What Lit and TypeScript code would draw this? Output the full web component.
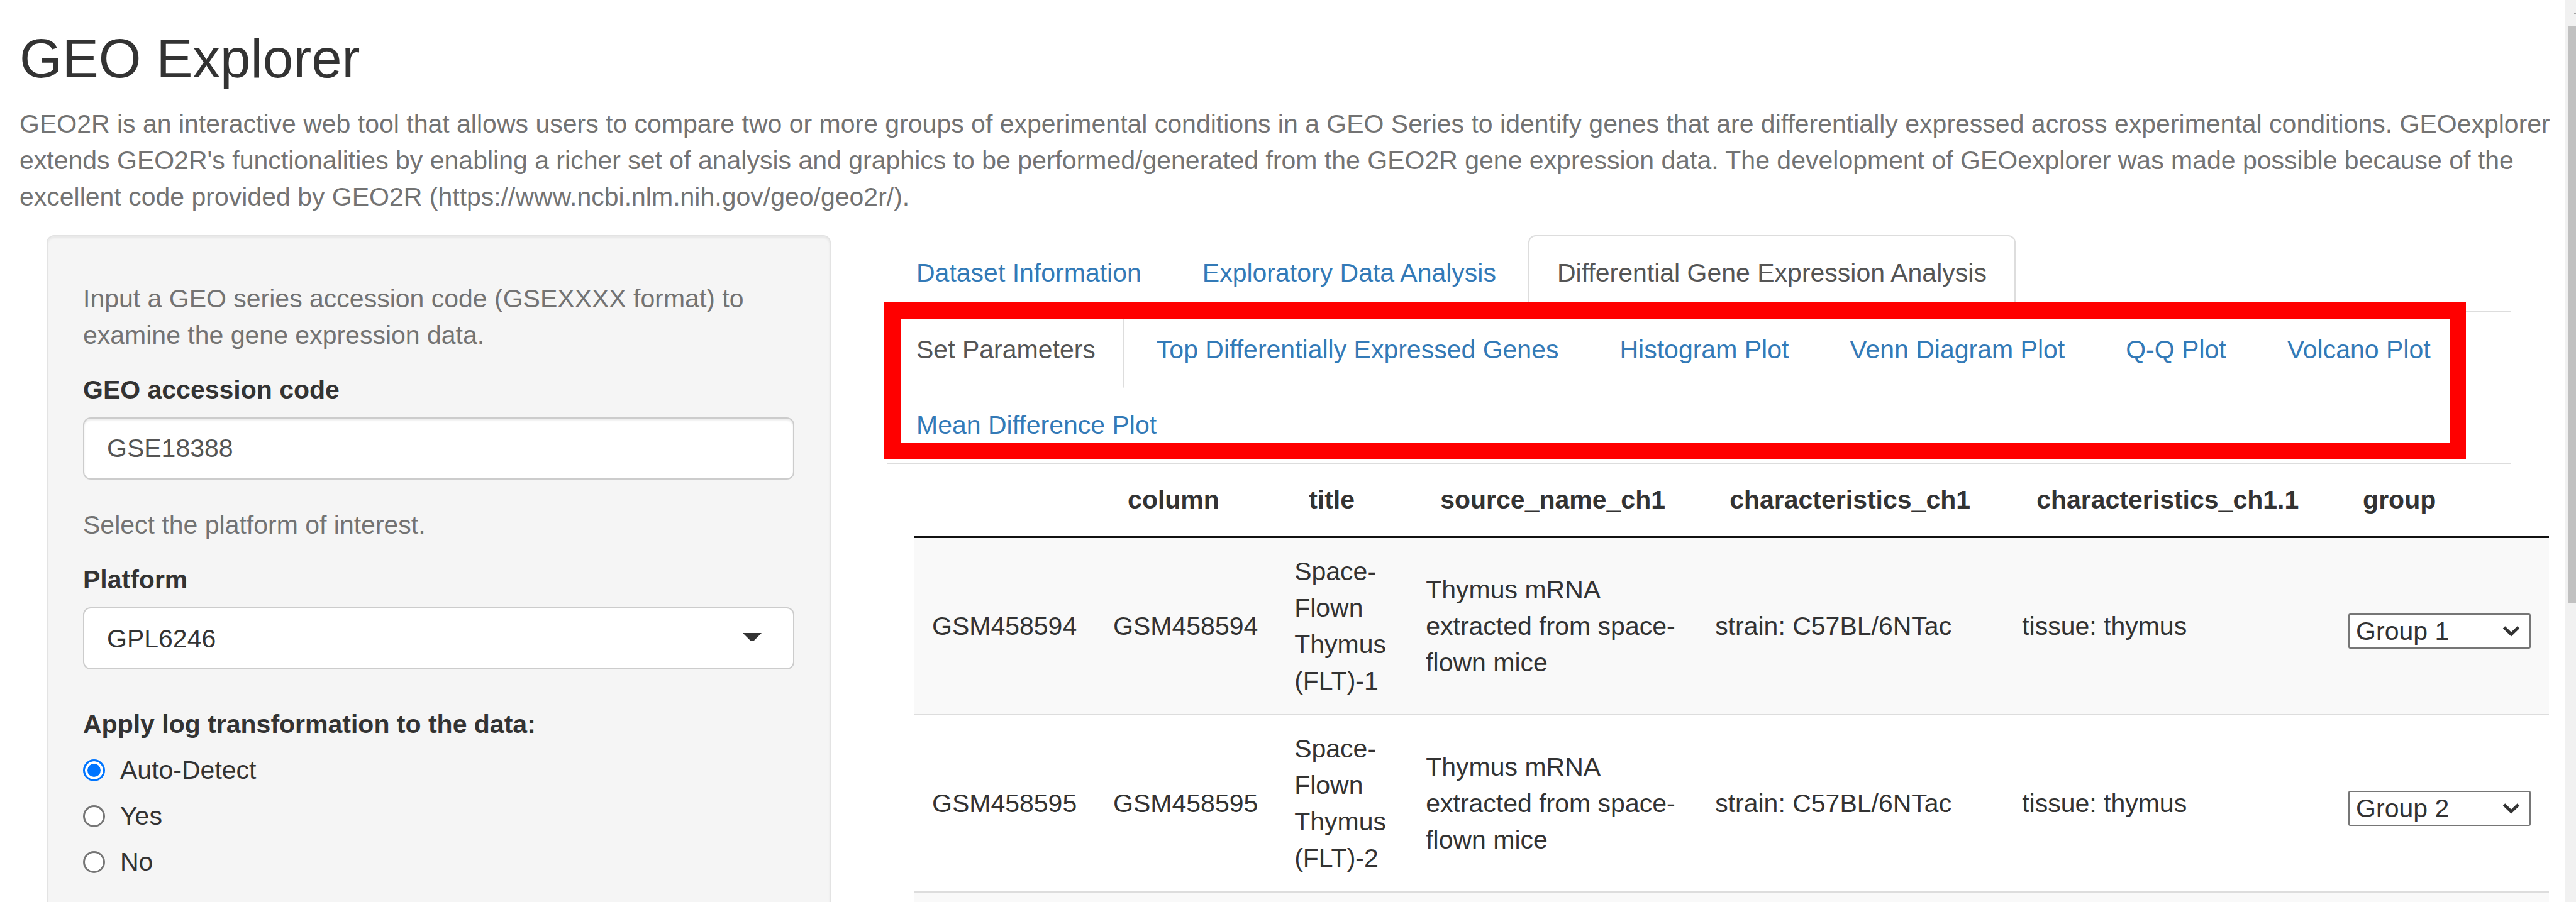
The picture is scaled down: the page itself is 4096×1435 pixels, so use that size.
import { LitElement, html, css, svg } from "lit";
import { customElement, property, state } from "lit/decorators.js";

interface Sample {
  id: string;
  title: string;
  source: string;
  strain: string;
  tissue: string;
  group: string;
}

const SAMPLES: Sample[] = [
  {
    id: "GSM458594",
    title: "Space-Flown Thymus (FLT)-1",
    source: "Thymus mRNA extracted from space-flown mice",
    strain: "strain: C57BL/6NTac",
    tissue: "tissue: thymus",
    group: "Group 1",
  },
  {
    id: "GSM458595",
    title: "Space-Flown Thymus (FLT)-2",
    source: "Thymus mRNA extracted from space-flown mice",
    strain: "strain: C57BL/6NTac",
    tissue: "tissue: thymus",
    group: "Group 2",
  },
];

const COLUMNS = [
  "column",
  "title",
  "source_name_ch1",
  "characteristics_ch1",
  "characteristics_ch1.1",
  "group",
];

const reset = css`
  * {
    box-sizing: border-box;
  }
  input,
  select {
    font: inherit;
    margin: 0;
  }
`;

@customElement("geo-tabs")
class GeoTabs extends LitElement {
  static styles = [
    reset,
    css`
      :host {
        display: block;
      }
      .tabs {
        display: flex;
        flex-wrap: wrap;
        list-style: none;
        margin: 0;
        padding: 0;
        border-bottom: 2px solid #ddd;
      }
      .item {
        margin-bottom: -2px;
      }
      .tab {
        display: block;
        margin-right: 5px;
        padding: 29px 44px 31px;
        border: 2px solid transparent;
        border-radius: 12px 12px 0 0;
        color: #337ab7;
        text-decoration: none;
      }
      .tab.active {
        color: #555;
        background: #fff;
        border-color: #ddd;
        border-bottom-color: transparent;
      }
    `,
  ];

  @property({ type: Array }) labels: string[] = [];
  @property({ type: Number }) active = 0;

  private pick(e: Event, i: number) {
    e.preventDefault();
    this.active = i;
  }

  render() {
    return html`<ul class="tabs">
      ${this.labels.map(
        (label, i) => html`<li class="item">
          <a
            href="#"
            class="tab ${i === this.active ? "active" : ""}"
            @click=${(e: Event) => this.pick(e, i)}
            >${label}</a
          >
        </li>`
      )}
    </ul>`;
  }
}

@customElement("geo-sidebar")
class GeoSidebar extends LitElement {
  static styles = [
    reset,
    css`
      :host {
        display: block;
        padding: 70px 56px 55px;
        background: #f5f5f5;
        border: 2px solid #e3e3e3;
        border-radius: 12px;
        box-shadow: inset 0 3px 3px rgba(0, 0, 0, 0.05);
      }
      .help {
        margin: 0;
        color: #737373;
      }
      .label {
        display: block;
        margin: 29px 0 15px;
        padding: 0;
        font-weight: 700;
      }
      .field {
        display: block;
        width: 100%;
        height: 99px;
        padding: 0 36px;
        border: 2px solid #ccc;
        border-radius: 12px;
        background: #fff;
      }
      .text {
        margin-bottom: 43px;
        color: #555;
        box-shadow: inset 0 3px 3px rgba(0, 0, 0, 0.075);
      }
      .picker {
        display: grid;
        align-items: center;
      }
      .picker > * {
        grid-area: 1 / 1;
      }
      .select {
        appearance: none;
        color: #333;
      }
      .caret {
        justify-self: end;
        width: 30px;
        height: 13px;
        margin: 0 52px 4px 0;
        pointer-events: none;
      }
      .radios {
        display: flex;
        flex-direction: column;
        gap: 15px;
        margin: 58px 0 0;
        padding: 0;
        border: 0;
      }
      .legend {
        padding: 0 0 15px;
        font-weight: 700;
      }
      .radio {
        display: flex;
        align-items: center;
        gap: 24px;
      }
      .dot {
        appearance: none;
        width: 35px;
        height: 35px;
        border: 3px solid #767676;
        border-radius: 50%;
        background: #fff;
      }
      .dot:checked {
        border-color: #0075ff;
        background: #0075ff;
        box-shadow: inset 0 0 0 4px #fff;
      }
    `,
  ];

  @state() private transform = "Auto-Detect";

  render() {
    return html`
      <p class="help">
        Input a GEO series accession code (GSEXXXX format) to examine the gene
        expression data.
      </p>
      <label class="label" for="accession">GEO accession code</label>
      <input class="field text" id="accession" type="text" value="GSE18388" />
      <p class="help">Select the platform of interest.</p>
      <label class="label" for="platform">Platform</label>
      <div class="picker">
        <select class="field select" id="platform">
          <option>GPL6246</option>
        </select>
        <svg class="caret" viewBox="0 0 30 13" aria-hidden="true">
          ${svg`<path d="M0 0H30L18 12Q15 14 12 12Z" fill="#333"/>`}
        </svg>
      </div>
      <fieldset class="radios">
        <legend class="legend">Apply log transformation to the data:</legend>
        ${["Auto-Detect", "Yes", "No"].map(
          (name) => html`<label class="radio">
            <input
              class="dot"
              type="radio"
              name="transform"
              .checked=${name === this.transform}
              @change=${() => (this.transform = name)}
            />${name}
          </label>`
        )}
      </fieldset>
    `;
  }
}

@customElement("geo-samples")
class GeoSamples extends LitElement {
  static styles = [
    reset,
    css`
      :host {
        display: block;
      }
      .table {
        width: 100%;
        table-layout: fixed;
        border-collapse: separate;
        border-spacing: 0;
      }
      .c-id,
      .c-column {
        width: 11.08%;
      }
      .c-title {
        width: 8.04%;
      }
      .c-source {
        width: 17.69%;
      }
      .c-strain {
        width: 18.77%;
      }
      .c-tissue {
        width: 19.96%;
      }
      .head {
        padding: 28px 0 29px 52px;
        border-bottom: 3px solid #111;
        text-align: left;
        white-space: nowrap;
      }
      .cell {
        padding: 24px 29px;
        vertical-align: middle;
      }
      .row:nth-child(odd) {
        background: #f9f9f9;
      }
      .row + .row .cell {
        border-top: 2px solid #ddd;
      }
      .picker {
        display: grid;
        align-items: center;
        margin-top: 15px;
      }
      .picker > * {
        grid-area: 1 / 1;
      }
      .select {
        appearance: none;
        width: 100%;
        height: 56px;
        padding: 0 10px;
        border: 2px solid #767676;
        border-radius: 3px;
        background: #fff;
        color: #333;
        line-height: 50px;
      }
      .chevron {
        justify-self: end;
        width: 28px;
        height: 18px;
        margin-right: 17px;
        pointer-events: none;
      }
    `,
  ];

  render() {
    return html`<table class="table">
      <colgroup>
        <col class="c-id" />
        <col class="c-column" />
        <col class="c-title" />
        <col class="c-source" />
        <col class="c-strain" />
        <col class="c-tissue" />
        <col />
      </colgroup>
      <thead>
        <tr>
          <td class="head"></td>
          ${COLUMNS.map((c) => html`<th class="head" scope="col">${c}</th>`)}
        </tr>
      </thead>
      <tbody>
        ${SAMPLES.map(
          (s) => html`<tr class="row">
            <td class="cell">${s.id}</td>
            <td class="cell">${s.id}</td>
            <td class="cell">${s.title}</td>
            <td class="cell">${s.source}</td>
            <td class="cell">${s.strain}</td>
            <td class="cell">${s.tissue}</td>
            <td class="cell">
              <div class="picker">
                <select class="select" aria-label="group">
                  <option>${s.group}</option>
                </select>
                <svg class="chevron" viewBox="0 0 28 18" aria-hidden="true">
                  ${svg`<path d="M2.500 3L14 14L25.500 3" fill="none" stroke="#333" stroke-width="5"/>`}
                </svg>
              </div>
            </td>
          </tr>`
        )}
        <tr class="row">
          <td class="cell" colspan="7"></td>
        </tr>
      </tbody>
    </table>`;
  }
}

@customElement("app-root")
class AppRoot extends LitElement {
  static styles = [
    reset,
    css`
      :host {
        display: flex;
        height: 100vh;
        overflow: hidden;
        background: #fff;
        color: #333;
        font: 41px/58px "Liberation Sans", Arial, sans-serif;
      }
      .page {
        flex: 1;
        min-width: 0;
        display: flex;
        flex-direction: column;
      }
      .intro {
        padding: 45px 20px 32px 31px;
      }
      .title {
        margin: 0 0 27px;
        font-size: 87px;
        line-height: 96px;
        font-weight: 400;
      }
      .lead {
        margin: 0;
        color: #737373;
      }
      .columns {
        flex: 1;
        min-height: 0;
        display: grid;
        grid-template-columns: 1247fr 2581fr;
        gap: 90px;
        padding: 0 87px 0 74px;
      }
      .main {
        min-width: 0;
      }
      .subnav {
        position: relative;
      }
      .highlight {
        position: absolute;
        inset: -15px 71px 8px -5px;
        border: 26px solid #f00;
        pointer-events: none;
      }
      .samples {
        margin: 0 -61px 0 42px;
      }
      .scrollbar {
        flex: none;
        width: 17px;
        display: flex;
        flex-direction: column;
        background: #f1f1f1;
      }
      .arrow {
        align-self: flex-end;
        width: 3px;
        height: 3px;
        margin: 20px 0 18px;
        background: #a3a3a3;
      }
      .thumb {
        height: 64%;
        margin-left: 4px;
        background: #c1c1c1;
      }
    `,
  ];

  render() {
    return html`
      <div class="page">
        <header class="intro">
          <h2 class="title">GEO Explorer</h2>
          <p class="lead">
            GEO2R is an interactive web tool that allows users to compare two or
            more groups of experimental conditions in a GEO Series to identify
            genes that are differentially expressed across experimental
            conditions. GEOexplorer extends GEO2R's functionalities by enabling
            a richer set of analysis and graphics to be performed/generated from
            the GEO2R gene expression data. The development of GEOexplorer was
            made possible because of the excellent code provided by GEO2R
            (https://www.ncbi.nlm.nih.gov/geo/geo2r/).
          </p>
        </header>
        <div class="columns">
          <geo-sidebar></geo-sidebar>
          <main class="main">
            <geo-tabs
              .labels=${[
                "Dataset Information",
                "Exploratory Data Analysis",
                "Differential Gene Expression Analysis",
              ]}
              .active=${2}
            ></geo-tabs>
            <div class="subnav">
              <geo-tabs
                .labels=${[
                  "Set Parameters",
                  "Top Differentially Expressed Genes",
                  "Histogram Plot",
                  "Venn Diagram Plot",
                  "Q-Q Plot",
                  "Volcano Plot",
                  "Mean Difference Plot",
                ]}
                .active=${0}
              ></geo-tabs>
              <div class="highlight"></div>
            </div>
            <geo-samples class="samples"></geo-samples>
          </main>
        </div>
      </div>
      <div class="scrollbar" aria-hidden="true">
        <div class="arrow"></div>
        <div class="thumb"></div>
      </div>
    `;
  }
}
